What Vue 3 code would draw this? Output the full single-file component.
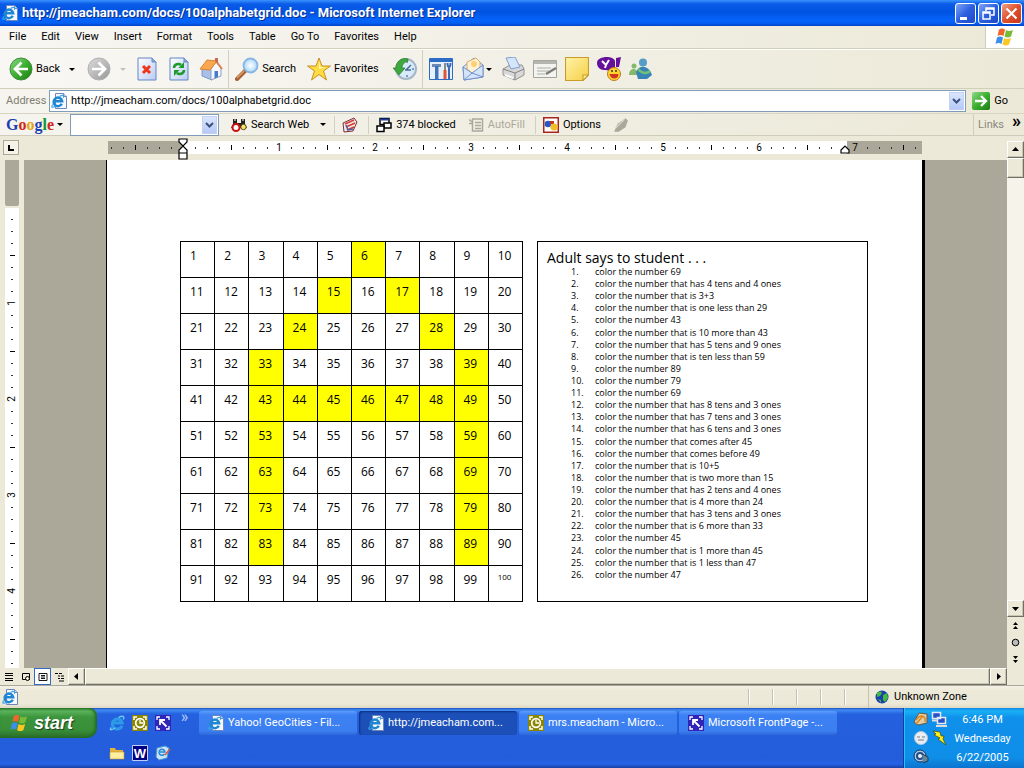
<script setup>
const menus = ['File', 'Edit', 'View', 'Insert', 'Format', 'Tools', 'Table', 'Go To', 'Favorites', 'Help']

const colored = new Set([6, 15, 17, 24, 28, 33, 39, 43, 44, 45, 46, 47, 48, 49, 53, 59, 63, 69, 73, 79, 83, 89])
const rows = Array.from({ length: 10 }, (_, r) => Array.from({ length: 10 }, (_, c) => r * 10 + c + 1))

const steps = [
  '69', 'that has 4 tens and 4 ones', 'that is 3+3', 'that is one less than 29', '43',
  'that is 10 more than 43', 'that has 5 tens and 9 ones', 'that is ten less than 59', '89', '79', '69',
  'that has 8 tens and 3 ones', 'that has 7 tens and 3 ones', 'that has 6 tens and 3 ones',
  'that comes after 45', 'that comes before 49', 'that is 10+5', 'that is two more than 15',
  'that has 2 tens and 4 ones', 'that is 4 more than 24', 'that has 3 tens and 3 ones',
  'that is 6 more than 33', '45', 'that is 1 more than 45', 'that is 1 less than 47', '47',
]

function mark(k) {
  const n = Math.abs(k)
  if (n === 0) return { kind: 'none', label: '' }
  if (n % 8 === 0) return { kind: 'num', label: String(n / 8) }
  return { kind: n % 4 === 0 ? 'tick' : 'dot', label: '' }
}
const hMarks = Array.from({ length: 68 }, (_, i) => mark(i - 6))
const vMarks = Array.from({ length: 38 }, (_, i) => mark(i + 1))

const tasks = [
  { icon: 'ie', text: 'Yahoo! GeoCities - Fil...', active: false },
  { icon: 'ie', text: 'http://jmeacham.com...', active: true },
  { icon: 'outlook', text: 'mrs.meacham - Micro...', active: false },
  { icon: 'frontpage', text: 'Microsoft FrontPage -...', active: false },
]
const quick = ['e', 'outlook', 'frontpage', 'folder', 'word', 'desk']
const views = ['v1', 'v2', 'v3', 'v4']
</script>

<template>
  <div class="screen">
    <svg class="defs" aria-hidden="true">
      <defs>
        <linearGradient id="gGreen" x1="0" y1="0" x2="1" y2="1"><stop offset="0" stop-color="#8fd98a" /><stop offset=".5" stop-color="#3cb02f" /><stop offset="1" stop-color="#1c7c14" /></linearGradient>
        <linearGradient id="gGray" x1="0" y1="0" x2="1" y2="1"><stop offset="0" stop-color="#dcdcdc" /><stop offset="1" stop-color="#989898" /></linearGradient>
        <linearGradient id="gPage" x1="0" y1="0" x2="1" y2="1"><stop offset="0" stop-color="#fff" /><stop offset="1" stop-color="#b9ccf5" /></linearGradient>
        <linearGradient id="gNote" x1="0" y1="0" x2="1" y2="1"><stop offset="0" stop-color="#fff3a8" /><stop offset="1" stop-color="#f6cf45" /></linearGradient>
        <radialGradient id="gGlass"><stop offset="0" stop-color="#fff" /><stop offset="1" stop-color="#a9d8f8" /></radialGradient>
        <symbol id="e" viewBox="0 0 16 16">
          <path d="M13 10.700A5 5 0 1 1 13.200 8H4.500" fill="none" stroke="#2b9be6" stroke-width="3" />
          <path d="M2.200 12.500C0 15.500 3 15 6 13M9.500 2.700C13.500.400 15.800 1 14.300 4.500" fill="none" stroke="#6cc4f7" stroke-width="1.500" />
        </symbol>
        <symbol id="ie" viewBox="0 0 16 16">
          <path d="M4.500.500h8l3 3v12h-11z" fill="#f4f8ff" stroke="#6d87bd" />
          <path d="M12.500.500v3h3" fill="#c6d6f4" stroke="#6d87bd" />
          <path d="M10.800 10.800A4.300 4.300 0 1 1 11.200 8.300H3.500" fill="none" stroke="#1f86d2" stroke-width="2.500" />
          <path d="M1.700 11.500C-.500 15 2 14.700 4.800 13M8.500 3.500c3-1.800 5-1.400 3.800 1.300" fill="none" stroke="#3aa6e6" stroke-width="1.200" />
        </symbol>
        <symbol id="back" viewBox="0 0 24 24">
          <circle cx="12" cy="12" r="11" fill="url(#gGreen)" stroke="#3f8c38" /><path d="M12.500 5.500 6 12l6.500 6.500M6.500 12H19" fill="none" stroke="#fff" stroke-width="2.700" />
        </symbol>
        <symbol id="fwd" viewBox="0 0 24 24">
          <circle cx="12" cy="12" r="11" fill="url(#gGray)" stroke="#b0b0b0" /><path d="M11.500 5.500 18 12l-6.500 6.500M17.500 12H5" fill="none" stroke="#fff" stroke-width="2.700" />
        </symbol>
        <symbol id="stop" viewBox="0 0 20 24">
          <path d="M1 1h14l4 4v18H1z" fill="url(#gPage)" stroke="#6585c4" /><path d="M15 1v4h4" fill="#8eabe4" stroke="#6585c4" /><path d="m6 9 7 7M13 9l-7 7" stroke="#f0351b" stroke-width="3" />
        </symbol>
        <symbol id="refresh" viewBox="0 0 20 24">
          <path d="M1 1h14l4 4v18H1z" fill="url(#gPage)" stroke="#6585c4" /><path d="M15 1v4h4" fill="#8eabe4" stroke="#6585c4" />
          <path d="M5 11c0-4 5-5 7-3" fill="none" stroke="#1d9a2a" stroke-width="2.500" /><path d="M15 5v6H9.500z" fill="#1d9a2a" /><path d="M15 13c0 4-5 5-7 3" fill="none" stroke="#1d9a2a" stroke-width="2.500" /><path d="M5 19v-6h5.500z" fill="#1d9a2a" />
        </symbol>
        <symbol id="home" viewBox="0 0 24 24">
          <path d="M3 11v8l10 4V10z" fill="#a9bfe8" stroke="#7d96c6" /><path d="m12 12 5-7 5 6v8l-10 4z" fill="#f5f8ff" stroke="#8ba0c8" /><path d="M15.500 14h3.500v6l-3.500 1.500z" fill="#477bc9" />
          <path d="M1 12 8 3l10 1-7 9z" fill="#f9a84f" stroke="#e0812f" /><path d="m17 4 6 8" stroke="#d9834a" stroke-width="2" /><path d="M16 1h3v5l-3-2z" fill="#c96a4c" />
        </symbol>
        <symbol id="search" viewBox="0 0 24 24">
          <path d="m2 22 8-8" stroke="#a55f30" stroke-width="4" stroke-linecap="round" /><path d="m2 21 7-7" stroke="#e0a36c" stroke-width="1.500" />
          <circle cx="15.500" cy="8.500" r="7" fill="url(#gGlass)" stroke="#8ab4e4" stroke-width="1.800" />
        </symbol>
        <symbol id="star" viewBox="0 0 24 24"><path d="m12 1 3 8h8.500l-7 5 3 9L12 17.500 4.500 23l3-9-7-5H9z" fill="#ffdc3f" stroke="#c89024" /><path d="m12 4 1.500 6h6L12 12z" fill="#fff6b0" /></symbol>
        <symbol id="history" viewBox="0 0 24 24">
          <circle cx="13" cy="12" r="10" fill="#d8ebfa" stroke="#a5b6c8" stroke-width="2" /><path d="M13 13l5-5M12 13h6" stroke="#4a6b9b" stroke-width="1.500" /><circle cx="14" cy="5" r="1" fill="#68809f" /><circle cx="14" cy="19" r="1" fill="#68809f" /><circle cx="20" cy="12" r="1" fill="#68809f" />
          <path d="M15 2C8 0 3 5 3 11H0l6 7 6-7H9c0-3 2-6 6-7z" fill="#3fa93d" stroke="#2a7c2c" stroke-width=".7" />
        </symbol>
        <symbol id="tools" viewBox="0 0 24 22">
          <path d="M.500.500h23v21H.500z" fill="#e7f1fc" stroke="#2d6cc4" /><path d="M1 1h22v3H1z" fill="#2d6cc4" /><path d="M3 6h9v3H3z" fill="#6d8bb0" /><path d="M6 8h3.500v13H6z" fill="#3f74bd" /><path d="M16 5v8" stroke="#8a8a8a" stroke-width="2" /><path d="M16 12v9" stroke="#e2552e" stroke-width="3" /><path d="M18.500 5q0 4 1.500 4t1.500-4M20 8v13" fill="none" stroke="#3869b4" stroke-width="2" />
        </symbol>
        <symbol id="mail" viewBox="0 0 22 24">
          <path d="m1 10 11-9 9 7v12L2 23z" fill="#dbe8fb" stroke="#7192ca" /><path d="m5 5 9-4 4 4v7l-8 4-5-4z" fill="#fff3d5" stroke="#d8ab62" /><path d="m1 10 9 6 11-8v12L2 23z" fill="#d3e4fb" stroke="#7192ca" /><path d="m2 23 8-7 11 4" fill="none" stroke="#7192ca" /><circle cx="12" cy="7" r="3" fill="#ffd073" />
        </symbol>
        <symbol id="print" viewBox="0 0 24 24">
          <path d="m2 12 7-4h12l2 4v6l-9 5-12-5z" fill="#d8d8d8" stroke="#929292" /><path d="m5 1 9-1 5 10-9 2z" fill="#d5e6fb" stroke="#7e9fce" /><path d="m2 12 12 4 9-4M14 16v7" fill="none" stroke="#828282" /><path d="m4 18 8 3" stroke="#fff" stroke-width="2" />
        </symbol>
        <symbol id="edit" viewBox="0 0 24 22">
          <path d="M.500 2.500h23v17H.500z" fill="#f3f3ef" stroke="#a5a59f" /><path d="M1 3h22v3H1z" fill="#b6b6b0" /><path d="M4 10h14M4 13h12M4 16h8" stroke="#b0b0aa" /><path d="m13 16 10-6" stroke="#7c7c78" stroke-width="2.500" />
        </symbol>
        <symbol id="note" viewBox="0 0 22 22"><path d="M.500.500h21v16l-5 5H.500z" fill="url(#gNote)" stroke="#c99d2b" /><path d="M21.500 16.500h-5v5z" fill="#fff0a0" stroke="#c99d2b" /></symbol>
        <symbol id="yahoo" viewBox="0 0 24 24">
          <path d="M0 6C0-1 16-2 18 4v8c-4 3-8 1-11 1C3 13 0 10 0 6z" fill="#66119a" /><path d="m5 4 4 4 3-5M9 8l-1 3" stroke="#fff" stroke-width="2" fill="none" /><path d="m19 1 5-1-2 10h-3z" fill="#66119a" />
          <circle cx="17" cy="17" r="6.500" fill="#ffd62c" stroke="#be7920" /><path d="M12.500 17h9c0 6-8 6-9 0z" fill="#d33224" /><circle cx="15" cy="14" r="1" fill="#333" /><circle cx="19" cy="14" r="1" fill="#333" />
        </symbol>
        <symbol id="msn" viewBox="0 0 24 22">
          <circle cx="5" cy="8" r="2.500" fill="#83b96e" /><path d="M0 17c0-8 9-8 9 0z" fill="#83b96e" /><circle cx="14" cy="4.500" r="4" fill="#579cc4" /><path d="M7 14c3-8 13-7 16 3l-5 4H9z" fill="#3784b5" /><path d="M9 11c5 6 10 4 12 2" stroke="#6ec07a" stroke-width="2.500" fill="none" />
        </symbol>
        <symbol id="flag" viewBox="0 0 20 18">
          <path d="M4 1.500q3-2 6 0L8.500 8q-3-2-6 0z" fill="#f0652c" /><path d="M11 2q3 2 7 0l-2 6.500q-3 2-6.500 0z" fill="#78bc35" /><path d="M2 9.500q3-2 6 0L6.500 16q-3-2-6 0z" fill="#3b8eea" /><path d="M9 10q3 2 7 0l-2 6.500q-3 2-6.500 0z" fill="#fcc623" />
        </symbol>
        <symbol id="binoc" viewBox="0 0 16 14">
          <path d="M2 1h4v4h4V1h4v5l2 4H0l2-4z" fill="#222" /><path d="M3 2h2M11 2h2" stroke="#fff" /><circle cx="5" cy="9.500" r="3.500" fill="#fff" stroke="#cc1212" stroke-width="2" /><circle cx="12.500" cy="9" r="2.700" fill="#ffe36a" stroke="#5a4a12" />
        </symbol>
        <symbol id="news" viewBox="0 0 16 16"><path d="m1 6 11-5 3 4-4 9-9 1z" fill="#f3e8e4" stroke="#7c2e36" /><path d="m3 7 9-4M4 10l9-4M5 13l7-3" stroke="#d33b36" stroke-width="1.500" /><path d="m4 8 2 5 5-1" fill="none" stroke="#4a62a8" stroke-width="1.500" /></symbol>
        <symbol id="popup" viewBox="0 0 16 15">
          <path d="M4 1h9v6H4z" fill="#fff" stroke="#000" stroke-width="1.500" /><path d="M4 1h9v2H4z" fill="#1c3d99" /><path d="M8 5.500h7v5H8z" fill="#fff" stroke="#000" stroke-width="1.500" /><path d="M1 8.500h7V14H1z" fill="#fff" stroke="#000" stroke-width="1.500" />
        </symbol>
        <symbol id="fill" viewBox="0 0 16 15"><path d="M4.500 1.500h10v12h-10z" fill="none" stroke="#aca899" stroke-width="1.500" /><path d="M7 5h6M7 8h6M7 11h6M1 2l4 3M1 6h3" stroke="#aca899" stroke-width="1.500" /></symbol>
        <symbol id="opts" viewBox="0 0 16 16"><path d="M.750.750h14.500v14.500H.750z" fill="#fff" stroke="#a92620" stroke-width="1.500" /><circle cx="5" cy="7" r="3.300" fill="#2858c4" /><path d="M7 4h4v3H7z" fill="#c93025" /><circle cx="11" cy="10" r="3.600" fill="#f4be26" /></symbol>
        <symbol id="pen" viewBox="0 0 14 14"><path d="m1 13 3-7 7-5 2 2-2 6-6 4z" fill="#aca899" /><path d="m2 10 8-8" stroke="#ddd9cc" /></symbol>
        <symbol id="go" viewBox="0 0 18 18"><rect width="18" height="18" rx="2" fill="url(#gGreen)" /><path d="M3 9h11M9 4l5 5-5 5" fill="none" stroke="#fff" stroke-width="2.300" /></symbol>
        <symbol id="outlook" viewBox="0 0 16 16"><path d="M0 0h16v16H0z" fill="#8b8500" /><path d="M2 5V2h3M11 2h3v3M14 11v3h-3M5 14H2v-3" fill="none" stroke="#fff" stroke-width="1.500" /><circle cx="8" cy="8" r="4.300" fill="#8b8500" stroke="#fff" stroke-width="1.700" /><path d="M8 5v3h3" fill="none" stroke="#fff" stroke-width="1.300" /></symbol>
        <symbol id="frontpage" viewBox="0 0 16 16"><path d="M0 0h16v16H0z" fill="#3025b9" /><path d="M2 5V2h3M11 2h3v3M14 11v3h-3M5 14H2v-3" fill="none" stroke="#fff" stroke-width="1.300" /><path d="M11.500 11.500 6 6M5 10V5h5" fill="none" stroke="#fff" stroke-width="1.800" /></symbol>
        <symbol id="folder" viewBox="0 0 16 16"><path d="M1 3h5l1 2h7v9H1z" fill="#e5b23b" /><path d="M1 7h14v7H1z" fill="#fff0a0" stroke="#c79530" stroke-width=".600" /></symbol>
        <symbol id="word" viewBox="0 0 16 16"><path d="M.500.500h15v15H.500z" fill="#000084" stroke="#c5cff5" /><text x="8" y="13" text-anchor="middle" font-family="Liberation Sans, sans-serif" font-weight="700" font-size="13" fill="#fff">W</text></symbol>
        <symbol id="desk" viewBox="0 0 16 16"><path d="m2 3 8-2 4 2-2 10-8 2-3-3z" fill="#c9e5fa" stroke="#4e95cf" /><path d="M9.500 9A3 3 0 1 1 10 7H5" fill="none" stroke="#2889d4" stroke-width="1.500" /><path d="m10 10 5-6" stroke="#dd5b37" stroke-width="1.500" /></symbol>
        <symbol id="globe" viewBox="0 0 14 14"><circle cx="7" cy="7" r="6.500" fill="#1a3fae" /><path d="M2 3q4-3 5 0l-2 3-3 1zM8 5l4-2 1 5-3 4-2-2zM3 9l3 1v3z" fill="#43bc3b" /></symbol>
        <symbol id="v1" viewBox="0 0 10 10"><path d="M1 1.500h8M1 3.500h8M1 6.500h8M1 8.500h8" stroke="#000" /></symbol>
        <symbol id="v2" viewBox="0 0 10 10"><path d="M1.500 1.500h7v6h-7z" fill="none" stroke="#000" /><circle cx="6.500" cy="6.500" r="2" fill="#ece9d8" stroke="#000" /></symbol>
        <symbol id="v3" viewBox="0 0 10 10"><path d="M1 1.500h8v7H1zM3 3.500h4M3 5h4M3 6.500h4" fill="none" stroke="#000" stroke-width=".9" /></symbol>
        <symbol id="v4" viewBox="0 0 10 10"><path d="M0 1.500h3M4 1.500h3M3 4h2M6 4h3M3 6.500h2M6 6.500h3M4 9h5" stroke="#000" /></symbol>
        <symbol id="t1" viewBox="0 0 16 16"><path d="m1 11 5-9 8 1v9l-9 2z" fill="#e0cfa8" stroke="#6b5540" /><path d="M3 9c5-7 10-4 9 2M3 13l7-8" fill="none" stroke="#e0861b" stroke-width="1.500" /></symbol>
        <symbol id="t2" viewBox="0 0 16 16"><path d="M1.500 1.500h8v6h-8zM6.500 6.500h8v6h-8z" fill="#2450c8" stroke="#e5e9f3" stroke-width="1.500" /><path d="M5 15h11M1 9.500h5" stroke="#ddd" stroke-width="2" /></symbol>
        <symbol id="t3" viewBox="0 0 16 16"><circle cx="8" cy="8" r="6.500" fill="#e9eef6" stroke="#b5c5d8" /><path d="M4 7h3M9 7h3M5 10h6" stroke="#777" /></symbol>
        <symbol id="t4" viewBox="0 0 16 16"><path d="m2 1 7 1 1 4h3l-1 3 3 6-8-6 2-1-6-3 2-1z" fill="#ffee19" stroke="#3b4713" stroke-width=".700" /></symbol>
        <symbol id="t5" viewBox="0 0 16 16"><circle cx="7" cy="7" r="6" fill="#a7c8e8" stroke="#18345e" /><circle cx="7" cy="7" r="3" fill="#e9f2fb" stroke="#214c87" stroke-width="2" /><path d="m9 5 6 3v4l-5 2" fill="#61859c" stroke="#223c50" /></symbol>
      </defs>
    </svg>

    <header class="title">
      <svg class="i16"><use href="#ie" /></svg>
      <h1>http://jmeacham.com/docs/100alphabetgrid.doc - Microsoft Internet Explorer</h1>
      <button class="win" aria-label="Minimize"><svg viewBox="0 0 19 19"><path d="M4 13h7v3H4z" fill="#fff" /></svg></button>
      <button class="win" aria-label="Restore"><svg viewBox="0 0 19 19"><path d="M7 7V4h8v7h-3M7 5h8" fill="none" stroke="#fff" stroke-width="1.500" /><path d="M4 8h7v7H4zM4 9h7" fill="none" stroke="#fff" stroke-width="1.500" /></svg></button>
      <button class="win close" aria-label="Close"><svg viewBox="0 0 19 19"><path d="m4.500 4.500 10 10M14.500 4.500l-10 10" stroke="#fff" stroke-width="2.200" /></svg></button>
    </header>

    <nav class="menu">
      <button v-for="m in menus" :key="m">{{ m }}</button>
      <span class="brand"><svg viewBox="0 0 20 18"><use href="#flag" /></svg></span>
    </nav>

    <div class="tools">
      <button class="tool"><svg class="i24"><use href="#back" /></svg>Back</button>
      <button class="drop" aria-label="Back list"></button>
      <button class="tool fwd" aria-label="Forward"><svg class="i24"><use href="#fwd" /></svg></button>
      <button class="drop off" aria-label="Forward list"></button>
      <button class="tool" aria-label="Stop"><svg class="i24"><use href="#stop" /></svg></button>
      <button class="tool" aria-label="Refresh"><svg class="i24"><use href="#refresh" /></svg></button>
      <button class="tool" aria-label="Home"><svg class="i24"><use href="#home" /></svg></button>
      <i class="sep"></i>
      <button class="tool"><svg class="i24"><use href="#search" /></svg>Search</button>
      <button class="tool fav"><svg class="i24"><use href="#star" /></svg>Favorites</button>
      <button class="tool hist" aria-label="History"><svg class="i24"><use href="#history" /></svg></button>
      <i class="sep"></i>
      <button class="tool" aria-label="Tools"><svg class="i24"><use href="#tools" /></svg></button>
      <button class="tool mail" aria-label="Mail"><svg class="i24"><use href="#mail" /></svg></button>
      <button class="drop mini" aria-label="Mail list"></button>
      <button class="tool" aria-label="Print"><svg class="i24"><use href="#print" /></svg></button>
      <button class="tool" aria-label="Edit"><svg class="i24"><use href="#edit" /></svg></button>
      <button class="tool" aria-label="Discuss"><svg class="i24"><use href="#note" /></svg></button>
      <button class="tool" aria-label="Yahoo Messenger"><svg class="i24"><use href="#yahoo" /></svg></button>
      <button class="tool" aria-label="Messenger"><svg class="i24"><use href="#msn" /></svg></button>
    </div>

    <div class="address">
      <label for="url">Address</label>
      <div class="combo">
        <svg class="i16"><use href="#ie" /></svg>
        <input id="url" type="text" value="http://jmeacham.com/docs/100alphabetgrid.doc">
        <button class="arrow" aria-label="Show addresses"><svg viewBox="0 0 9 6"><path d="m1 1 3.500 3.500L8 1" fill="none" stroke="#3c4f7e" stroke-width="2" /></svg></button>
      </div>
      <button class="go"><svg><use href="#go" /></svg>Go</button>
    </div>

    <div class="google">
      <button class="logo" aria-label="Google"><b class="b">G</b><b class="r">o</b><b class="y">o</b><b class="b">g</b><b class="g">l</b><b class="r">e</b></button>
      <i class="caret"></i>
      <div class="combo gbox">
        <input type="text" aria-label="Google search">
        <button class="arrow" aria-label="Recent searches"><svg viewBox="0 0 9 6"><path d="m1 1 3.500 3.500L8 1" fill="none" stroke="#3c4f7e" stroke-width="2" /></svg></button>
      </div>
      <button class="gb web"><svg class="i16"><use href="#binoc" /></svg>Search Web</button>
      <i class="caret"></i>
      <i class="gsep"></i>
      <button class="gb news" aria-label="News"><svg class="i16"><use href="#news" /></svg></button>
      <i class="gsep"></i>
      <button class="gb"><svg class="i16"><use href="#popup" /></svg>374 blocked</button>
      <button class="gb off" disabled><svg class="i16"><use href="#fill" /></svg>AutoFill</button>
      <i class="gsep"></i>
      <button class="gb"><svg class="i16"><use href="#opts" /></svg>Options</button>
      <button class="gb" aria-label="Highlight"><svg class="i16"><use href="#pen" /></svg></button>
      <span class="links">Links<b>»</b></span>
    </div>

    <main class="work">
      <div class="corner"><button aria-label="Tab stop"><svg viewBox="0 0 14 14"><path d="M4 4h2v4h4v2H4z" /></svg></button></div>
      <div class="hruler">
        <div class="hbar">
          <span v-for="(m, i) in hMarks" :key="i" class="cell" :class="m.kind">{{ m.label }}</span>
          <svg class="indent" viewBox="0 0 10 22"><path d="M1 1h8v3L5 8 1 4zM1 15v-3l4-4 4 4v3zM1 15h8v6H1z" fill="#fff" stroke="#000" stroke-width="1.200" /></svg>
          <svg class="indent right" viewBox="0 0 10 22"><path d="M1 15v-3l4-4 4 4v3z" fill="#fff" stroke="#000" stroke-width="1.200" /></svg>
        </div>
      </div>
      <div class="vscroll">
        <button class="sb" aria-label="Scroll up"><svg viewBox="0 0 9 9"><path d="m1 6 3.500-4L8 6z" /></svg></button>
        <div class="sb thumb"></div>
        <div class="track"></div>
        <button class="sb" aria-label="Scroll down"><svg viewBox="0 0 9 9"><path d="m1 3 3.500 4L8 3z" /></svg></button>
        <button class="nav" aria-label="Previous page"><svg viewBox="0 0 9 9"><path d="M2 4 4.500 1 7 4zM2 8l2.500-3L7 8z" /></svg></button>
        <button class="nav" aria-label="Browse object"><svg viewBox="0 0 9 9"><circle cx="4.500" cy="4.500" r="3.300" fill="#bbb" stroke="#000" /></svg></button>
        <button class="nav" aria-label="Next page"><svg viewBox="0 0 9 9"><path d="m2 1 2.500 3L7 1zM2 5l2.500 3L7 5z" /></svg></button>
      </div>
      <div class="vruler">
        <div class="vgap"></div>
        <div class="vbar"><span v-for="(m, i) in vMarks" :key="i" class="cell" :class="m.kind">{{ m.label }}</span></div>
      </div>
      <div class="desk">
        <article class="page">
          <table>
            <tbody>
              <tr v-for="(r, i) in rows" :key="i">
                <td v-for="n in r" :key="n" :class="{ on: colored.has(n), small: n === 100 }">{{ n }}</td>
              </tr>
            </tbody>
          </table>
          <section class="list">
            <h2>Adult says to student . . .</h2>
            <ol>
              <li v-for="(s, i) in steps" :key="i"><span>{{ i + 1 }}.</span>color the number {{ s }}</li>
            </ol>
          </section>
        </article>
      </div>
      <div class="hscroll">
        <button v-for="v in views" :key="v" class="view" :class="{ sel: v === 'v3' }" :aria-label="'View ' + v"><svg><use :href="'#' + v" /></svg></button>
        <button class="sb" aria-label="Scroll left"><svg viewBox="0 0 9 9"><path d="M6 1 2 4.500 6 8z" /></svg></button>
        <div class="sb bar"></div>
        <button class="sb" aria-label="Scroll right"><svg viewBox="0 0 9 9"><path d="m3 1 4 3.500L3 8z" /></svg></button>
      </div>
    </main>

    <div class="status">
      <svg class="i16"><use href="#ie" /></svg>
      <div class="panes"><i v-for="n in 5" :key="n"></i></div>
      <span class="zone"><svg><use href="#globe" /></svg>Unknown Zone</span>
    </div>

    <footer class="taskbar">
      <button class="start"><svg viewBox="0 0 20 18"><use href="#flag" /></svg>start</button>
      <div class="quick"><button v-for="q in quick" :key="q" :aria-label="q"><svg class="i16"><use :href="'#' + q" /></svg></button></div>
      <span class="more">»</span>
      <div class="tasks">
        <button v-for="t in tasks" :key="t.text" :class="{ active: t.active }"><svg class="i16"><use :href="'#' + t.icon" /></svg><span>{{ t.text }}</span></button>
      </div>
      <div class="tray">
        <div class="ticons"><svg v-for="n in 5" :key="n" class="i16"><use :href="'#t' + n" /></svg></div>
        <div class="clock"><span>6:46 PM</span><span>Wednesday</span><span>6/22/2005</span></div>
      </div>
    </footer>
  </div>
</template>

<style>
body { margin: 0; }
</style>

<style scoped>
* { box-sizing: border-box; }
.screen { min-height: 100vh; display: flex; flex-direction: column; background: #ece9d8; color: #000; font: 11px/14px Roboto, "Liberation Sans", sans-serif; overflow: hidden; }
.defs { position: absolute; width: 0; height: 0; }
button { font: inherit; color: inherit; background: none; border: 0; padding: 0; margin: 0; display: flex; align-items: center; white-space: nowrap; flex: none; }
svg { display: block; flex: none; }
.i16 { width: 16px; height: 16px; }
.i24 { width: 24px; height: 24px; }

.title { height: 26px; display: flex; align-items: center; gap: 2px; padding: 0 2px; background: linear-gradient(#3a93ff 0, #0a5be8 4px, #0053e1 12px, #0564fb 20px, #0560f4 23px, #0142c5 26px); color: #fff; }
.title h1 { margin: 0 0 0 2px; flex: 1; font: 700 13px/18px Roboto, sans-serif; text-shadow: 1px 1px #0b2f8f; white-space: nowrap; overflow: hidden; }
.win { width: 21px; height: 21px; border: 1px solid #fff; border-radius: 3px; background: linear-gradient(135deg, #7fa5f6, #2c5fe0 50%, #1c49c9); justify-content: center; }
.win svg { width: 19px; height: 19px; }
.close { background: linear-gradient(135deg, #f0a088, #e0502c 50%, #c8361a); }

.menu { height: 23px; display: flex; align-items: center; gap: 15px; padding-left: 9px; background: linear-gradient(90deg, #f7f6f2, #ece9d8); border-bottom: 1px solid #d0cfba; }
.brand { margin-left: auto; width: 39px; align-self: stretch; background: #fff; border-left: 1px solid #d0cfba; display: flex; align-items: center; justify-content: center; }
.brand svg { width: 20px; height: 18px; }

.tools { height: 40px; display: flex; align-items: center; gap: 8px; padding-left: 9px; background: linear-gradient(90deg, #f8f7f4, #ece9d8); border-top: 1px solid #fff; border-bottom: 1px solid #d0cfba; }
.tool { gap: 3px; }
.drop { width: 8px; height: 24px; justify-content: center; }
.drop::before, .caret::before { content: ""; border: 3px solid transparent; border-top-color: #000; border-bottom: 0; }
.drop.off::before { border-top-color: #c6c3b5; }
.fwd { margin-left: 3px; }
.sep { width: 1px; align-self: stretch; background: #d3d0c0; margin-left: -3px; }
.sep + .tool { margin-left: -2px; }
.fav { margin-left: 3px; }
.hist { margin-left: 6px; }
.mini { margin-left: -8px; }

.address { height: 24px; display: flex; align-items: center; padding: 0 16px 0 6px; background: linear-gradient(90deg, #f5f4ee, #ece9d8); }
.address label { color: #7f7d72; width: 43px; }
.combo { flex: 1; height: 22px; display: flex; align-items: center; background: #fff; border: 1px solid #7f9db9; padding: 1px; }
.combo input { flex: 1; min-width: 0; border: 0; outline: 0; padding: 0 0 0 4px; font: inherit; background: none; }
.arrow { width: 15px; height: 18px; background: linear-gradient(#dbe5fd, #b5c9f6); border: 1px solid #c2d2f7; justify-content: center; }
.arrow svg { width: 9px; height: 6px; }
.go { gap: 4px; margin-left: 6px; }
.go svg { width: 18px; height: 18px; }

.google { height: 23px; display: flex; align-items: center; padding-left: 6px; background: linear-gradient(90deg, #f5f4ee, #ece9d8); border-top: 1px solid #d8d5c4; border-bottom: 1px solid #cfccba; }
.logo { font: 16px/20px "Liberation Serif", serif; }
.logo b { font-weight: 700; }
.b { color: #1a3fb5; } .r { color: #d0261d; } .y { color: #e0a514; } .g { color: #149634; }
.caret { width: 12px; display: flex; justify-content: center; }
.gbox { flex: none; width: 149px; margin: 0 12px 0 4px; }
.gb { gap: 4px; margin-right: 12px; }
.gb.off { color: #aca899; margin-right: 5px; }
.web { margin-right: 8px; }
.news { margin-right: 5px; }
.gsep { width: 1px; height: 18px; background: #d3d0c0; margin: 0 7px 0 5px; }
.links { margin-left: auto; align-self: stretch; display: flex; align-items: center; gap: 8px; padding: 0 3px 0 4px; border-left: 1px solid #d0cdbc; color: #8b897d; }
.links b { color: #000; font-size: 18px; padding-bottom: 8px; }

.work { flex: 1; display: grid; grid-template-columns: 24px minmax(0, 1fr) 17px; grid-template-rows: 24px 1fr 17px; }
.corner { padding: 4px 3px; }
.corner button { width: 16px; height: 15px; border: 1px solid #aca899; background: #f5f3e8; }
.hruler { display: flex; justify-content: center; padding-top: 5px; }
.hbar { position: relative; width: 821px; height: 13px; display: flex; background: linear-gradient(90deg, transparent 3px, #aca899 3px 78px, #fff 78px 742px, #aca899 742px 817px, transparent 817px); }
.cell { flex: none; display: flex; align-items: center; justify-content: center; font-size: 10px; line-height: 12px; }
.hbar .cell { width: 12px; }
.vbar .cell { height: 12px; }
.dot::before { content: ""; width: 1px; height: 2px; background: #333; }
.hbar .tick::before { content: ""; width: 1px; height: 5px; background: #000; }
.vbar .dot::before { width: 2px; height: 1px; }
.vbar .tick::before { content: ""; width: 5px; height: 1px; background: #000; }
.vbar .num { writing-mode: sideways-lr; }
.indent { position: absolute; left: 73px; top: -3px; width: 10px; height: 22px; }
.indent.right { left: 735px; }
.vruler { display: flex; flex-direction: column; padding: 0 5px 0 5px; overflow: hidden; }
.vgap { height: 46px; background: #aca899; border-radius: 0 0 2px 2px; flex: none; }
.vbar { flex: 1 1 0; min-height: 0; margin-top: 2px; padding-top: 5px; background: #fff; display: flex; flex-direction: column; overflow: hidden; }
.desk { background: #aca899; display: flex; justify-content: center; }
.page { width: 819px; min-height: 508px; border-left: 1px solid #000; border-right: 3px solid #000; background: #fff; display: flex; align-items: flex-start; gap: 14px; padding: 81px 54px 0 73px; }
table { border-collapse: collapse; width: 343px; flex: none; table-layout: fixed; }
td { height: 36px; border: 1px solid #000; padding: 5px 0 0 9px; vertical-align: top; font: 12px/17px "Open Sans", sans-serif; }
td.on { background: #ff0; }
td.small { font-size: 8px; line-height: 12px; }
.list { flex: 1; height: 361px; border: 1px solid #000; padding: 8px 9px 20px; display: flex; flex-direction: column; font-family: "Open Sans", sans-serif; }
.list h2 { margin: 0; font-weight: 400; font-size: 14px; line-height: 16px; }
.list ol { flex: 1; display: flex; flex-direction: column; justify-content: space-between; list-style: none; margin: 0; padding: 0 0 0 24px; font-size: 9px; line-height: 12px; }
.list li { display: flex; white-space: nowrap; }
.list li span { width: 24px; flex: none; }

.sb { border: 1px solid; border-color: #fff #716f64 #716f64 #fff; background: #ece9d8; width: 17px; height: 17px; justify-content: center; flex: none; box-shadow: inset -1px -1px #c9c6b5; }
.sb svg, .nav svg { width: 9px; height: 9px; }
.vscroll { grid-column: 3; grid-row: 1 / 4; display: flex; flex-direction: column; padding: 5px 0 17px; }
.thumb { height: 20px; }
.track { flex: 1; background: #f5f3ea; }
.nav { width: 17px; height: 17px; justify-content: center; }
.hscroll { grid-column: 1 / 3; grid-row: 3; display: flex; }
.view { width: 17px; height: 17px; justify-content: center; }
.view svg { width: 10px; height: 10px; }
.view.sel { border: 1px solid #316ac5; background: #fff; }
.bar { flex: 1; }

.status { height: 23px; display: flex; align-items: center; padding-left: 2px; border-top: 1px solid #aca899; background: linear-gradient(#f3f1e6, #ece9d8 5px 18px, #dcd8c2); }
.panes { margin-left: auto; display: flex; align-self: stretch; padding: 3px 0; }
.panes i { width: 24px; border-left: 1px solid #c5c2b0; box-shadow: inset 1px 0 #fff; }
.zone { width: 156px; display: flex; align-items: center; gap: 5px; padding-left: 6px; border-left: 1px solid #c5c2b0; align-self: stretch; }
.zone svg { width: 14px; height: 14px; }

.taskbar { height: 60px; display: flex; align-items: flex-start; color: #fff; background: linear-gradient(#1f4fc0 0, #3f8cf3 2px, #2560df 6px, #245ddb 50px, #2663e6 56px, #1941a5); }
.start { width: 97px; height: 30px; padding-left: 10px; gap: 5px; border-radius: 0 8px 10px 0; background: linear-gradient(#2f7a2f, #5bb45b 3px, #3c943c 9px, #388f38 22px, #2a6b2a); font: italic 700 18px/22px "Liberation Sans", sans-serif; text-shadow: 1px 1px 1px #1c3f1c; box-shadow: inset -2px 0 3px #1f6a1f; }
.start svg { width: 19px; height: 18px; }
.quick { display: grid; grid-template-columns: repeat(3, 16px); column-gap: 7px; row-gap: 14px; padding: 7px 0 0 12px; }
.more { width: 27px; text-align: center; font-size: 16px; line-height: 18px; color: #b5d0fa; margin-right: 1px; }
.tasks { flex: 1; display: flex; gap: 2px; padding-top: 3px; min-width: 0; }
.tasks button { flex: 0 1 158px; min-width: 0; height: 24px; padding-left: 9px; gap: 4px; border-radius: 3px; background: linear-gradient(#5e9bfb, #3c81f3 4px, #3b7ef0 20px, #2c68d8); }
.tasks button.active { background: #1c50b8; box-shadow: inset 1px 1px 2px #0c2f80; }
.tasks span { overflow: hidden; text-overflow: clip; }
.tray { width: 121px; height: 60px; display: flex; border-left: 1px solid #0b3f9b; background: linear-gradient(#1288e6, #19b0f6 3px, #0f90ea 10px, #0f8ee8 50px, #0c74cf); box-shadow: inset 1px 0 #2bc0f8; padding: 2px 6px 0 9px; }
.ticons { display: grid; grid-template-columns: 16px 16px; gap: 3px 2px; align-content: start; padding-top: 1px; }
.clock { flex: 1; display: flex; flex-direction: column; align-items: center; line-height: 19px; }
</style>
